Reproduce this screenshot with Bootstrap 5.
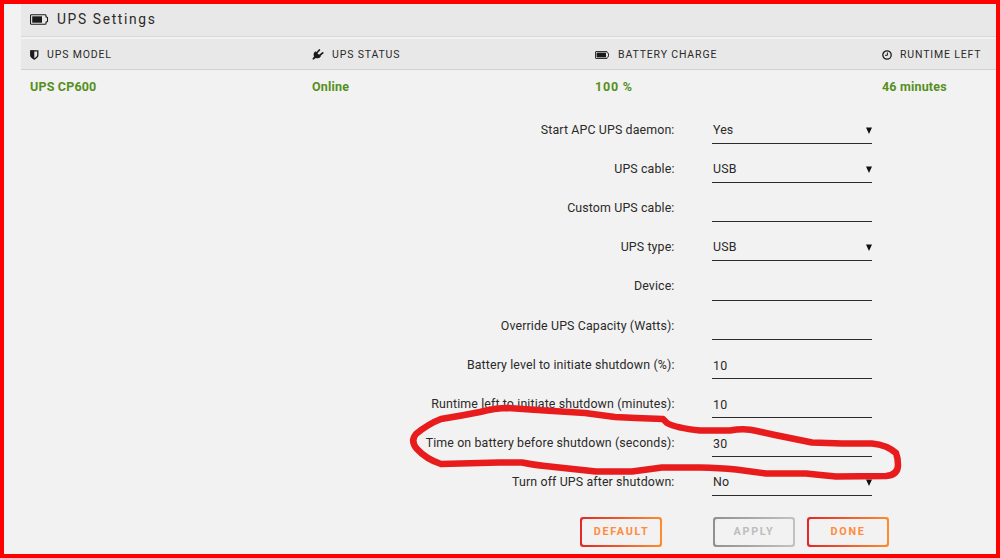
<!DOCTYPE html>
<html lang="en">
<head>
<meta charset="utf-8">
<title>UPS Settings</title>
<link rel="stylesheet" href="https://cdn.jsdelivr.net/npm/bootstrap@5.3.0/dist/css/bootstrap.min.css">
<style>
body{background:#f2f2f2;color:#2b2a29;font-family:Roboto,"Liberation Sans",sans-serif;font-size:12.4px;line-height:20px;letter-spacing:.12px}
.frame{width:1000px;height:558px;border:4px solid #f00;padding-left:17px}
.title-bar{height:33px;background:#e8e8e8;border-bottom:1px solid #d8d8d8;padding:0 9px 2px;font-size:13.8px;letter-spacing:1.65px}
.grid4{display:grid;grid-template-columns:282px 283px 287px 1fr;padding-left:9px;align-items:center}
.heads{margin-top:2px;height:31px;background:#e8e8e8;border-bottom:1px solid #d0d0d0;font-size:10.5px;letter-spacing:.85px;padding-top:1px}
.heads svg{margin-right:8px}
.vals{height:34px;margin-bottom:1px;color:#55901c;font-weight:700;font-size:12.5px;letter-spacing:.18px}
.pct{letter-spacing:.8px}
.ups-form{padding-top:7px}
.ups-row{height:39.15px}
.ups-label{width:653.5px;margin-right:37.5px;text-align:right;white-space:nowrap;height:20px;margin-top:7.8px}
.field{width:160px;height:32px;border-bottom:1px solid #2b2a29;padding:7.8px 0 0 1px}
.field.entry{padding-top:8.8px;letter-spacing:.4px}
.arrow{width:6px;height:7px;margin:7px 0 0 0}
.actions{padding-left:559px;padding-top:14px}
.grad{width:82px;height:30px;border:0;border-radius:3px;background:linear-gradient(90deg,#e22828,#ff8c2f);padding:2px;font-size:10.8px;font-weight:700;letter-spacing:1.7px;color:#ff8c3c}
.grad span{display:flex;align-items:center;justify-content:center;height:26px;background:#f2f2f2;border-radius:2px;padding-left:1px}
.grad.off{background:linear-gradient(90deg,#909090,#c2c2c2);color:#bdbdbd;margin:0 12px 0 50.5px}
.scribble{position:absolute;left:0;top:0;pointer-events:none}
</style>
<script src="https://cdn.jsdelivr.net/npm/bootstrap@5.3.0/dist/js/bootstrap.bundle.min.js"></script>
</head>
<body class="overflow-hidden">
<main class="frame position-relative">
  <div class="title-bar d-flex align-items-center"><svg width="19" height="11" class="me-2" viewBox="0 0 19 11"><path d="M1.300.8h13.900q.8 0 .8.8v1.200l1.500.8v3.800l-1.500.8v1.200q0 .8-.8.8H1.300q-.8 0-.8-.8V1.600q0-.8.8-.8z" fill="none" stroke="#1c1b1b" stroke-width="1.1"/><path d="M2.200 2.300h9.800v6.400H2.200z" fill="#1c1b1b"/></svg><span>UPS Settings</span></div>
  <div class="grid4 heads">
    <div class="d-flex align-items-center"><svg width="9" height="10" viewBox="0 0 9 10"><path d="M.8.8h7v4.500q0 2-3.500 3.800Q.8 7.300.8 5.300z" fill="none" stroke="#1c1b1b" stroke-width="1.300"/><path d="M.5.5h3.800v8.500Q.5 7.500.5 5z" fill="#1c1b1b"/></svg><span>UPS MODEL</span></div>
    <div class="d-flex align-items-center"><svg width="12" height="11" viewBox="0 0 12 11"><path d="M3.200 2.200L8.900 7.400Q6.500 10.200 3.700 9L1.400 10.800.3 10 2 7.400Q.8 4.500 3.200 2.200z" fill="#1c1b1b"/><path d="M4.600 4l2.800-3M7.600 6.500l3.100-2.600" stroke="#1c1b1b" stroke-width="1.700" stroke-linecap="round"/></svg><span>UPS STATUS</span></div>
    <div class="d-flex align-items-center"><svg width="15" height="8" viewBox="0 0 15 8"><path d="M1 .5h11v1.200l1.500.6v3.400l-1.500.6v1.200H1q-.5 0-.5-.5V1Q.5.5 1 .5z" fill="none" stroke="#333"/><path d="M1.600 1.600h9.400v4.800H1.600z" fill="#1c1b1b"/></svg><span>BATTERY CHARGE</span></div>
    <div class="d-flex align-items-center"><svg width="10" height="10" viewBox="0 0 10 10"><circle cx="5" cy="5" r="4.200" fill="none" stroke="#1c1b1b" stroke-width="1.300"/><path d="M5.400 2.500v2.800H3" fill="none" stroke="#1c1b1b"/></svg><span>RUNTIME LEFT</span></div>
  </div>
  <div class="grid4 vals"><div>UPS CP600</div><div>Online</div><div class="pct">100 %</div><div>46 minutes</div></div>
  <form class="ups-form">
    <div class="ups-row d-flex"><div class="ups-label"><span>Start APC UPS daemon:</span></div><div class="field d-flex justify-content-between"><span>Yes</span><svg class="arrow" viewBox="0 0 6 7"><path d="M0 .5h6L3 7z" fill="#111"/></svg></div></div>
    <div class="ups-row d-flex"><div class="ups-label"><span>UPS cable:</span></div><div class="field d-flex justify-content-between"><span>USB</span><svg class="arrow" viewBox="0 0 6 7"><path d="M0 .5h6L3 7z" fill="#111"/></svg></div></div>
    <div class="ups-row d-flex"><div class="ups-label"><span>Custom UPS cable:</span></div><div class="field entry"></div></div>
    <div class="ups-row d-flex"><div class="ups-label"><span>UPS type:</span></div><div class="field d-flex justify-content-between"><span>USB</span><svg class="arrow" viewBox="0 0 6 7"><path d="M0 .5h6L3 7z" fill="#111"/></svg></div></div>
    <div class="ups-row d-flex"><div class="ups-label"><span>Device:</span></div><div class="field entry"></div></div>
    <div class="ups-row d-flex"><div class="ups-label"><span>Override UPS Capacity (Watts):</span></div><div class="field entry"></div></div>
    <div class="ups-row d-flex"><div class="ups-label"><span>Battery level to initiate shutdown (%):</span></div><div class="field entry">10</div></div>
    <div class="ups-row d-flex"><div class="ups-label"><span>Runtime left to initiate shutdown (minutes):</span></div><div class="field entry">10</div></div>
    <div class="ups-row d-flex"><div class="ups-label"><span>Time on battery before shutdown (seconds):</span></div><div class="field entry">30</div></div>
    <div class="ups-row d-flex"><div class="ups-label"><span>Turn off UPS after shutdown:</span></div><div class="field d-flex justify-content-between"><span>No</span><svg class="arrow" viewBox="0 0 6 7"><path d="M0 .5h6L3 7z" fill="#111"/></svg></div></div>
    <div class="actions d-flex"><button type="button" class="grad"><span>DEFAULT</span></button><button type="button" class="grad off"><span>APPLY</span></button><button type="button" class="grad"><span>DONE</span></button></div>
  </form>
</main>
<svg class="scribble" width="1000" height="558" viewBox="0 0 1000 558"><path d="M441 419Q460 416 480 412Q495 408 508 408L545 410.500L585 413L615 417L636 418L663 419L667 423Q676 428 700 430.500H730Q745 428 757 431L775 435L812 442.500L842 443.500L872 443.500Q887 445 896 453Q898 458 898 465Q898 475 886 476L836 476.500Q820 475 806 473.500H766L736 469.500Q720 468 700 467.500H662L632 471.500H596L545 466Q535 465 522 462.500H499L441 464Q426 459 417 449Q410 441 416 434Q428 424 441 419Z" fill="none" stroke="#e81c1c" stroke-width="6.500" stroke-linejoin="round"/></svg>
</body>
</html>
